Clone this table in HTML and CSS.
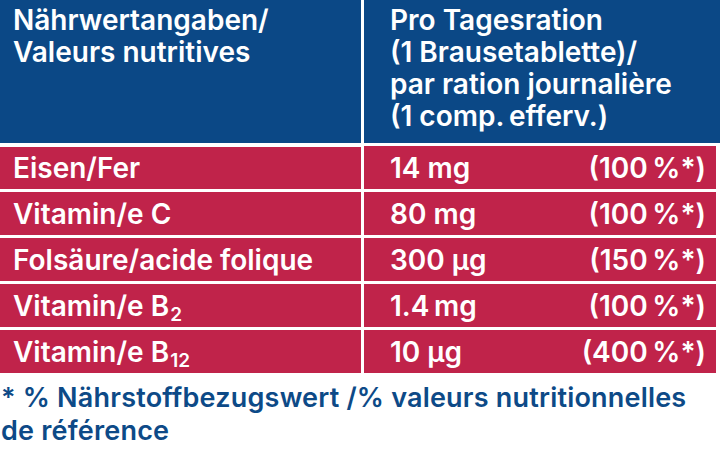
FILE: index.html
```html
<!DOCTYPE html>
<html lang="de">
<head>
<meta charset="utf-8">
<link rel="stylesheet" href="styles.css">
</head>
<body>
<div class="table">
  <div class="cell head">Nährwertangaben/<br>Valeurs nutritives</div>
  <div class="cell head right">Pro Tagesration<br>(1 Brausetablette)/<br>par ration journalière<br>(1 comp.&#8201;efferv.)</div>

  <div class="cell row"><span>Eisen/Fer</span></div>
  <div class="cell row right"><span>14 mg</span><span>(100&#8201;%*)</span></div>

  <div class="cell row"><span>Vitamin/e C</span></div>
  <div class="cell row right"><span>80 mg</span><span>(100&#8201;%*)</span></div>

  <div class="cell row"><span>Folsäure/acide folique</span></div>
  <div class="cell row right"><span>300 µg</span><span>(150&#8201;%*)</span></div>

  <div class="cell row"><span>Vitamin/e B<sub>2</sub></span></div>
  <div class="cell row right"><span>1.4&#8201;mg</span><span>(100&#8201;%*)</span></div>

  <div class="cell row"><span>Vitamin/e B<sub>12</sub></span></div>
  <div class="cell row right"><span>10 µg</span><span>(400&#8201;%*)</span></div>
</div>
<p class="note">* % Nährstoffbezugswert /% valeurs nutritionnelles<br>de référence</p>
</body>
</html>
```

FILE: styles.css
```css
html, body {
  margin: 0;
  padding: 0;
  background: #ffffff;
}
body {
  width: 720px;
  height: 450px;
  overflow: hidden;
  font-family: Inter, "Liberation Sans", sans-serif;
  font-weight: 600;
  font-size: 28px;
  color: #ffffff;
}
.table {
  display: grid;
  grid-template-columns: 361px 1fr;
  grid-template-rows: 143px repeat(5, 43px);
  column-gap: 3px;
  row-gap: 3px;
  margin-right: 4px;
}
.table .cell.head {
  background: #0b4886;
  line-height: 32px;
  padding: 4px 0 0 13px;
}
.table .cell.head.right {
  padding-left: 26px;
}
.cell.head + .cell.head {
  margin-right: -4px;
}
.cell.row {
  background: #c0234a;
  display: flex;
  align-items: center;
  padding-left: 13px;
  line-height: 32px;
}
.cell.row.right {
  justify-content: space-between;
  padding-left: 26px;
  padding-right: 10px;
}
.table .cell:nth-child(3) {
  margin-top: 1px;
}
sub {
  font-size: 19px;
  line-height: 0;
  vertical-align: -5px;
  margin-left: 1px;
}
.note {
  margin: 8px 0 0 1px;
  color: #0d4a87;
  font-size: 27px;
  font-weight: 600;
  letter-spacing: 0.2px;
  line-height: 33px;
}
```
